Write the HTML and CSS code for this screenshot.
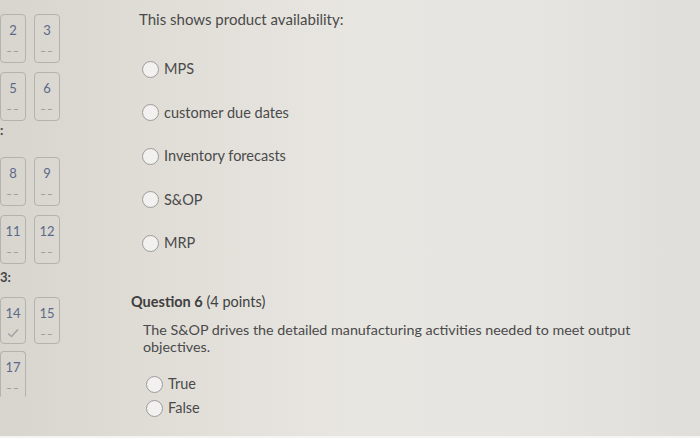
FILE: index.html
```html
<!DOCTYPE html>
<html>
<head>
<meta charset="utf-8">
<link rel="stylesheet" href="styles.css">
</head>
<body>
<div class="page">
  <nav class="nav">
    <div class="grid first">
      <div class="tile"><span class="num">2</span><span class="dash">––</span></div>
      <div class="tile"><span class="num">3</span><span class="dash">––</span></div>
      <div class="tile"><span class="num">5</span><span class="dash">––</span></div>
      <div class="tile"><span class="num">6</span><span class="dash">––</span></div>
    </div>
    <div class="sec-label cut">:</div>
    <div class="grid">
      <div class="tile"><span class="num">8</span><span class="dash">––</span></div>
      <div class="tile"><span class="num">9</span><span class="dash">––</span></div>
      <div class="tile"><span class="num">11</span><span class="dash">––</span></div>
      <div class="tile"><span class="num">12</span><span class="dash">––</span></div>
    </div>
    <div class="sec-label">3:</div>
    <div class="grid last">
      <div class="tile"><span class="num">14</span><svg class="check" width="12" height="10" viewBox="0 0 12 10"><path d="M1 5.5 L4.5 8.5 L11 1.5" fill="none" stroke="#a3a3a3" stroke-width="1.6"/></svg></div>
      <div class="tile"><span class="num">15</span><span class="dash">––</span></div>
      <div class="tile open"><span class="num">17</span><span class="dash">––</span></div>
    </div>
  </nav>
  <main class="main">
    <section class="question q5">
      <p class="prompt">This shows product availability:</p>
      <ul class="options">
        <li class="option"><span class="radio"></span>MPS</li>
        <li class="option"><span class="radio"></span>customer due dates</li>
        <li class="option"><span class="radio"></span>Inventory forecasts</li>
        <li class="option"><span class="radio"></span>S&amp;OP</li>
        <li class="option"><span class="radio"></span>MRP</li>
      </ul>
    </section>
    <section class="question q6">
      <h2 class="q-title"><b>Question 6</b> (4 points)</h2>
      <p class="prompt body">The S&amp;OP drives the detailed manufacturing activities needed to meet output objectives.</p>
      <ul class="options tf">
        <li class="option"><span class="radio"></span>True</li>
        <li class="option"><span class="radio"></span>False</li>
      </ul>
    </section>
  </main>
</div>
<div class="bottom-strip"></div>
</body>
</html>
```
FILE: styles.css
```css
html, body {
  margin: 0;
  padding: 0;
}
body {
  width: 700px;
  height: 438px;
  overflow: hidden;
  font-family: Lato, "Open Sans", sans-serif;
  color: #4a4a4a;
  background: linear-gradient(90deg, #d8d5cf 0%, #e1ded8 25%, #e8e6e1 50%, #e7e5e1 75%, #dfdedb 100%);
  position: relative;
}
.page {
  display: flex;
  height: 436px;
}
.nav {
  width: 70px;
  flex: none;
  overflow: hidden;
}
.grid {
  display: grid;
  grid-template-columns: 26px 26px;
  column-gap: 8px;
  row-gap: 9px;
}
.grid.first {
  margin-top: 14px;
}
.grid.last {
  row-gap: 7px;
}
.tile {
  height: 49px;
  box-sizing: border-box;
  border: 1px solid #b4b2ae;
  border-radius: 4px;
  display: flex;
  flex-direction: column;
  align-items: center;
  padding-top: 7px;
}
.grid.last .tile {
  height: 47px;
}
.grid.last .tile.open {
  border-bottom-color: transparent;
  border-radius: 4px 4px 0 0;
  height: 46px;
}
.num {
  font-size: 13px;
  line-height: 16px;
  color: #5a6988;
}
.dash {
  font-size: 10px;
  line-height: 12px;
  margin-top: 6px;
  letter-spacing: 1px;
  color: #9a9a9a;
  font-weight: bold;
}
.check {
  margin-top: 7px;
}
.sec-label {
  font-size: 13px;
  font-weight: bold;
  line-height: 16px;
  color: #454545;
  margin-top: 5px;
  margin-bottom: 12px;
}
.sec-label.cut {
  margin-top: 1px;
  margin-bottom: 19px;
}
.main {
  flex: 1;
  padding-left: 61px;
}
.question p, .question ul, .question h2 {
  margin: 0;
  padding: 0;
}
.q5 {
  padding-left: 8px;
  padding-top: 9px;
}
.prompt {
  font-size: 15px;
  line-height: 20px;
}
.options {
  list-style: none;
  display: flex;
  flex-direction: column;
  gap: 23.5px;
}
.q5 .options {
  margin-top: 30px !important;
}
.option {
  display: flex;
  align-items: center;
  font-size: 14.5px;
  line-height: 20px;
  height: 20px;
}
.radio {
  width: 17px;
  height: 17px;
  box-sizing: border-box;
  border: 1px solid #9b9b9b;
  border-radius: 50%;
  background: #f2f1ef;
  margin-left: 3px;
  margin-right: 5px;
  flex: none;
}
.q6 {
  margin-top: 40px;
}
.q-title {
  font-size: 14.5px;
  line-height: 18px;
  font-weight: normal;
  color: #404040;
}
.q-title b {
  font-weight: bold;
}
.prompt.body {
  padding-left: 12px;
  margin-top: 10px !important;
  font-size: 14.3px;
  line-height: 17px;
  width: 500px;
}
.options.tf {
  padding-left: 12px;
  margin-top: 19px !important;
  gap: 4px;
}
.bottom-strip {
  position: absolute;
  left: 0;
  right: 0;
  bottom: 0;
  height: 2px;
  background: #f4f4f3;
}
```
